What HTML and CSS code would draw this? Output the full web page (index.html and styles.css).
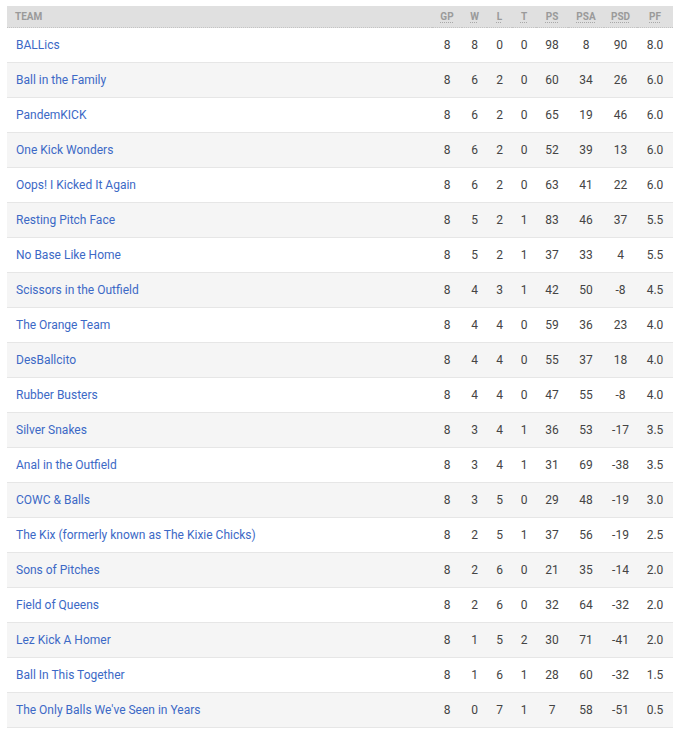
FILE: index.html
```html
<!DOCTYPE html>
<html>
<head>
<meta charset="utf-8">
<link rel="stylesheet" href="styles.css">
</head>
<body>
<div class="wrap">
<table class="standings">
<colgroup>
<col class="c-team"><col class="c-gp"><col class="c-w"><col class="c-l"><col class="c-t"><col class="c-ps"><col class="c-psa"><col class="c-psd"><col class="c-pf">
</colgroup>
<thead>
<tr>
<th class="team">Team</th>
<th><abbr>GP</abbr></th><th><abbr>W</abbr></th><th><abbr>L</abbr></th><th><abbr>T</abbr></th><th><abbr>PS</abbr></th><th><abbr>PSA</abbr></th><th><abbr>PSD</abbr></th><th><abbr>PF</abbr></th>
</tr>
</thead>
<tbody>
<tr><td class="team"><a href="#">BALLics</a></td><td>8</td><td>8</td><td>0</td><td>0</td><td>98</td><td>8</td><td>90</td><td>8.0</td></tr>
<tr><td class="team"><a href="#">Ball in the Family</a></td><td>8</td><td>6</td><td>2</td><td>0</td><td>60</td><td>34</td><td>26</td><td>6.0</td></tr>
<tr><td class="team"><a href="#">PandemKICK</a></td><td>8</td><td>6</td><td>2</td><td>0</td><td>65</td><td>19</td><td>46</td><td>6.0</td></tr>
<tr><td class="team"><a href="#">One Kick Wonders</a></td><td>8</td><td>6</td><td>2</td><td>0</td><td>52</td><td>39</td><td>13</td><td>6.0</td></tr>
<tr><td class="team"><a href="#">Oops! I Kicked It Again</a></td><td>8</td><td>6</td><td>2</td><td>0</td><td>63</td><td>41</td><td>22</td><td>6.0</td></tr>
<tr><td class="team"><a href="#">Resting Pitch Face</a></td><td>8</td><td>5</td><td>2</td><td>1</td><td>83</td><td>46</td><td>37</td><td>5.5</td></tr>
<tr><td class="team"><a href="#">No Base Like Home</a></td><td>8</td><td>5</td><td>2</td><td>1</td><td>37</td><td>33</td><td>4</td><td>5.5</td></tr>
<tr><td class="team"><a href="#">Scissors in the Outfield</a></td><td>8</td><td>4</td><td>3</td><td>1</td><td>42</td><td>50</td><td>-8</td><td>4.5</td></tr>
<tr><td class="team"><a href="#">The Orange Team</a></td><td>8</td><td>4</td><td>4</td><td>0</td><td>59</td><td>36</td><td>23</td><td>4.0</td></tr>
<tr><td class="team"><a href="#">DesBallcito</a></td><td>8</td><td>4</td><td>4</td><td>0</td><td>55</td><td>37</td><td>18</td><td>4.0</td></tr>
<tr><td class="team"><a href="#">Rubber Busters</a></td><td>8</td><td>4</td><td>4</td><td>0</td><td>47</td><td>55</td><td>-8</td><td>4.0</td></tr>
<tr><td class="team"><a href="#">Silver Snakes</a></td><td>8</td><td>3</td><td>4</td><td>1</td><td>36</td><td>53</td><td>-17</td><td>3.5</td></tr>
<tr><td class="team"><a href="#">Anal in the Outfield</a></td><td>8</td><td>3</td><td>4</td><td>1</td><td>31</td><td>69</td><td>-38</td><td>3.5</td></tr>
<tr><td class="team"><a href="#">COWC &amp; Balls</a></td><td>8</td><td>3</td><td>5</td><td>0</td><td>29</td><td>48</td><td>-19</td><td>3.0</td></tr>
<tr><td class="team"><a href="#">The Kix (formerly known as The Kixie Chicks)</a></td><td>8</td><td>2</td><td>5</td><td>1</td><td>37</td><td>56</td><td>-19</td><td>2.5</td></tr>
<tr><td class="team"><a href="#">Sons of Pitches</a></td><td>8</td><td>2</td><td>6</td><td>0</td><td>21</td><td>35</td><td>-14</td><td>2.0</td></tr>
<tr><td class="team"><a href="#">Field of Queens</a></td><td>8</td><td>2</td><td>6</td><td>0</td><td>32</td><td>64</td><td>-32</td><td>2.0</td></tr>
<tr><td class="team"><a href="#">Lez Kick A Homer</a></td><td>8</td><td>1</td><td>5</td><td>2</td><td>30</td><td>71</td><td>-41</td><td>2.0</td></tr>
<tr><td class="team"><a href="#">Ball In This Together</a></td><td>8</td><td>1</td><td>6</td><td>1</td><td>28</td><td>60</td><td>-32</td><td>1.5</td></tr>
<tr><td class="team"><a href="#">The Only Balls We've Seen in Years</a></td><td>8</td><td>0</td><td>7</td><td>1</td><td>7</td><td>58</td><td>-51</td><td>0.5</td></tr>
</tbody>
</table>
</div>
</body>
</html>
```
FILE: styles.css
```css
html, body {
  margin: 0;
  padding: 0;
  background: #fff;
}
.wrap {
  padding: 6px 8px 0 7px;
}
.standings {
  width: 666px;
  border-collapse: collapse;
  table-layout: fixed;
  font-family: Roboto, "Liberation Sans", sans-serif;
  font-size: 12px;
  color: #444;
  background: #fff;
}
.c-team { width: 425px; }
.c-gp { width: 30px; }
.c-w { width: 25px; }
.c-l { width: 25px; }
.c-t { width: 24px; }
.c-ps { width: 32px; }
.c-psa { width: 36px; }
.c-psd { width: 33px; }
.c-pf { width: 36px; }
.standings th {
  background: #e0e0e0;
  background-clip: padding-box;
  color: #9a9a9a;
  font-size: 10px;
  font-weight: bold;
  text-transform: uppercase;
  height: 21px;
  padding: 0;
  text-align: center;
  border-bottom: 1px dotted #c4c4c4;
  vertical-align: middle;
}
.standings th abbr {
  text-decoration: underline dotted #a8a8a8;
  text-underline-offset: 2px;
}
.standings th.team {
  text-align: left;
  padding-left: 8px;
}
.standings td {
  height: 34px;
  padding: 0;
  text-align: center;
  border-bottom: 1px solid #e6e6e6;
  vertical-align: middle;
}
.standings td.team {
  text-align: left;
  padding-left: 9px;
}
.standings tbody tr:nth-child(even) td {
  background: #f5f5f5;
}
.standings a {
  color: #3c69c6;
  text-decoration: none;
}
```
